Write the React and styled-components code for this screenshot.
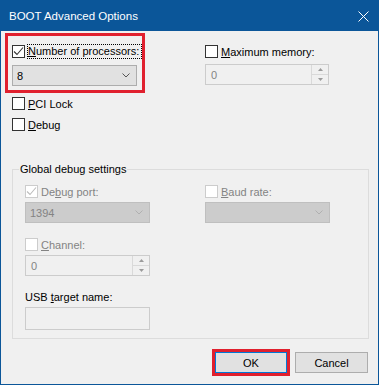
import React from "react";
import styled, { createGlobalStyle } from "styled-components";

const GlobalStyle = createGlobalStyle`
  html, body {
    margin: 0;
    padding: 0;
    background: #ffffff;
  }
  body {
    font-family: "Liberation Sans", Arial, sans-serif;
    font-size: 11px;
    color: #000000;
  }
`;

const color = {
  accent: "#0b5699",
  face: "#f0f0f0",
  text: "#000000",
  disabledText: "#838383",
  highlight: "#e0202e",
  focusBlue: "#0078d7",
};

const Window = styled.div`
  width: 379px;
  height: 385px;
  box-sizing: border-box;
  display: flex;
  flex-direction: column;
  border: 1px solid ${color.accent};
  border-top: 0;
  background: ${color.face};
`;

const TitleBar = styled.div`
  height: 31px;
  flex: none;
  display: flex;
  align-items: center;
  justify-content: space-between;
  padding: 0 10px 0 9px;
  margin: 0 -1px;
  background: ${color.accent};
  color: #ffffff;
  font-size: 11.5px;
`;

const CloseGlyph = styled.svg`
  display: block;
  margin-top: 1px;
`;

const Client = styled.div`
  flex: 1;
  display: flex;
  flex-direction: column;
`;

const TopGrid = styled.div`
  display: grid;
  grid-template-columns: 140px 1fr;
  column-gap: 60px;
  margin: 2px 0 0 4px;
`;

const Column = styled.div`
  display: flex;
  flex-direction: column;
  padding-top: ${(p) => p.$top || 0}px;
`;

const Highlight = styled.div`
  display: flex;
  flex-direction: column;
  box-sizing: border-box;
  width: 140px;
  border: 3px solid ${color.highlight};
  padding: 8px 4px 4px 4px;
`;

const CheckRow = styled.label`
  display: flex;
  align-items: center;
  gap: 3px;
  height: 15px;
  margin-top: ${(p) => p.$mt || 0}px;
  margin-left: ${(p) => p.$ml || 0}px;
  color: ${(p) => (p.$disabled ? color.disabledText : color.text)};
  white-space: nowrap;
`;

const Box = styled.span`
  width: 13px;
  height: 13px;
  flex: none;
  box-sizing: border-box;
  display: flex;
  align-items: center;
  justify-content: center;
  background: #ffffff;
  border: 1px solid ${(p) => (p.$disabled ? "#cccccc" : "#333333")};
`;

const FocusText = styled.span`
  outline: 1px dotted #000000;
  padding: 0 2px 1px 0;
`;

const Key = styled.span`
  text-decoration: underline;
  text-underline-offset: 1px;
`;

const Combo = styled.div`
  width: ${(p) => p.$width}px;
  height: 21px;
  box-sizing: border-box;
  margin-top: ${(p) => p.$mt || 0}px;
  display: flex;
  align-items: center;
  justify-content: space-between;
  padding: 0 6px 0 4px;
  border: 1px solid ${(p) => (p.$disabled ? "#bfbfbf" : "#adadad")};
  background: ${(p) => (p.$disabled ? "#cccccc" : "#e1e1e1")};
  color: ${(p) => (p.$disabled ? color.disabledText : color.text)};
`;

const Spinner = styled.div`
  width: ${(p) => p.$width}px;
  height: 21px;
  box-sizing: border-box;
  margin-top: ${(p) => p.$mt || 0}px;
  display: flex;
  border: 1px solid #cccccc;
  background: ${color.face};
  color: ${color.disabledText};
`;

const SpinValue = styled.div`
  flex: 1;
  display: flex;
  align-items: center;
  padding-left: 5px;
`;

const SpinButtons = styled.div`
  width: 16px;
  display: flex;
  flex-direction: column;
  border-left: 1px solid #d9d9d9;
`;

const SpinButton = styled.div`
  flex: 1;
  display: flex;
  align-items: center;
  justify-content: center;
  border-top: ${(p) => (p.$lower ? "1px solid #d9d9d9" : "0")};
`;

const FieldLabel = styled.div`
  height: 15px;
  display: flex;
  align-items: center;
  margin-top: ${(p) => p.$mt || 0}px;
`;

const TextBox = styled.div`
  width: 125px;
  height: 23px;
  box-sizing: border-box;
  margin-top: ${(p) => p.$mt || 0}px;
  border: 1px solid #cccccc;
  background: ${color.face};
`;

const GroupBox = styled.fieldset`
  width: 357px;
  box-sizing: border-box;
  margin: 29px 0 0 11px;
  padding: 7px 12px 8px 12px;
  border: 1px solid #dcdcdc;
  display: grid;
  grid-template-columns: 180px 1fr;
  align-items: start;
`;

const GroupTitle = styled.legend`
  line-height: 16px;
  padding: 0 1px;
  margin-left: -6px;
`;

const ButtonBar = styled.div`
  display: flex;
  justify-content: flex-end;
  gap: 8px;
  margin-top: 13px;
  padding-right: 10px;
`;

const Button = styled.button`
  width: ${(p) => (p.$default ? 72 : 73)}px;
  height: 21px;
  box-sizing: border-box;
  padding: 0;
  font: inherit;
  color: ${color.text};
  background: #e1e1e1;
  border: 1px solid ${(p) => (p.$default ? color.focusBlue : "#adadad")};
  outline: ${(p) => (p.$highlighted ? `3px solid ${color.highlight}` : "none")};
  outline-offset: 0;
`;

function Check({ checked, disabled }) {
  const stroke = disabled ? "#bcbcbc" : "#333333";
  return (
    <Box $disabled={disabled}>
      {checked && (
        <svg width="11" height="11" viewBox="0 0 11 11">
          <path d="M1 5.5 L4 8.5 L10 1.5" fill="none" stroke={stroke} strokeWidth="1.1" />
        </svg>
      )}
    </Box>
  );
}

function Chevron({ disabled }) {
  return (
    <svg width="8" height="5" viewBox="0 0 8 5">
      <path d="M0.5 0.5 L4 4 L7.5 0.5" fill="none" stroke={disabled ? "#b0b0b0" : "#555555"} strokeWidth="1" />
    </svg>
  );
}

function SpinBox({ width, mt }) {
  return (
    <Spinner $width={width} $mt={mt}>
      <SpinValue>0</SpinValue>
      <SpinButtons>
        <SpinButton>
          <svg width="5" height="3" viewBox="0 0 5 3">
            <path d="M0 3 L2.5 0 L5 3 Z" fill="#9a9a9a" />
          </svg>
        </SpinButton>
        <SpinButton $lower>
          <svg width="5" height="3" viewBox="0 0 5 3">
            <path d="M0 0 L2.5 3 L5 0 Z" fill="#9a9a9a" />
          </svg>
        </SpinButton>
      </SpinButtons>
    </Spinner>
  );
}

export default function App() {
  return (
    <>
      <GlobalStyle />
      <Window>
        <TitleBar>
          <span>BOOT Advanced Options</span>
          <CloseGlyph width="11" height="11" viewBox="0 0 11 11">
            <path d="M0.5 0.5 L10.5 10.5 M10.5 0.5 L0.5 10.5" stroke="#ffffff" strokeWidth="1" />
          </CloseGlyph>
        </TitleBar>
        <Client>
          <TopGrid>
            <Column>
              <Highlight>
                <CheckRow>
                  <Check checked />
                  <FocusText>
                    <Key>N</Key>umber of processors:
                  </FocusText>
                </CheckRow>
                <Combo $width={125} $mt={6}>
                  <span>8</span>
                  <Chevron />
                </Combo>
              </Highlight>
              <CheckRow $mt={3} $ml={7}>
                <Check />
                <span>
                  <Key>P</Key>CI Lock
                </span>
              </CheckRow>
              <CheckRow $mt={6} $ml={7}>
                <Check />
                <span>
                  <Key>D</Key>ebug
                </span>
              </CheckRow>
            </Column>
            <Column $top={11}>
              <CheckRow>
                <Check />
                <span>
                  <Key>M</Key>aximum memory:
                </span>
              </CheckRow>
              <SpinBox width={124} mt={5} />
            </Column>
          </TopGrid>

          <GroupBox>
            <GroupTitle>Global debug settings</GroupTitle>
            <Column>
              <CheckRow $disabled>
                <Check checked disabled />
                <span>
                  De<Key>b</Key>ug port:
                </span>
              </CheckRow>
              <Combo $width={125} $mt={3} $disabled>
                <span>1394</span>
                <Chevron disabled />
              </Combo>
              <CheckRow $mt={14} $disabled>
                <Check disabled />
                <span>
                  <Key>C</Key>hannel:
                </span>
              </CheckRow>
              <SpinBox width={125} mt={3} />
              <FieldLabel $mt={13}>
                <span>
                  USB <Key>t</Key>arget name:
                </span>
              </FieldLabel>
              <TextBox $mt={3} />
            </Column>
            <Column>
              <CheckRow $disabled>
                <Check disabled />
                <span>
                  <Key>B</Key>aud rate:
                </span>
              </CheckRow>
              <Combo $width={125} $mt={3} $disabled>
                <span />
                <Chevron disabled />
              </Combo>
            </Column>
          </GroupBox>

          <ButtonBar>
            <Button $default $highlighted>
              OK
            </Button>
            <Button>Cancel</Button>
          </ButtonBar>
        </Client>
      </Window>
    </>
  );
}
